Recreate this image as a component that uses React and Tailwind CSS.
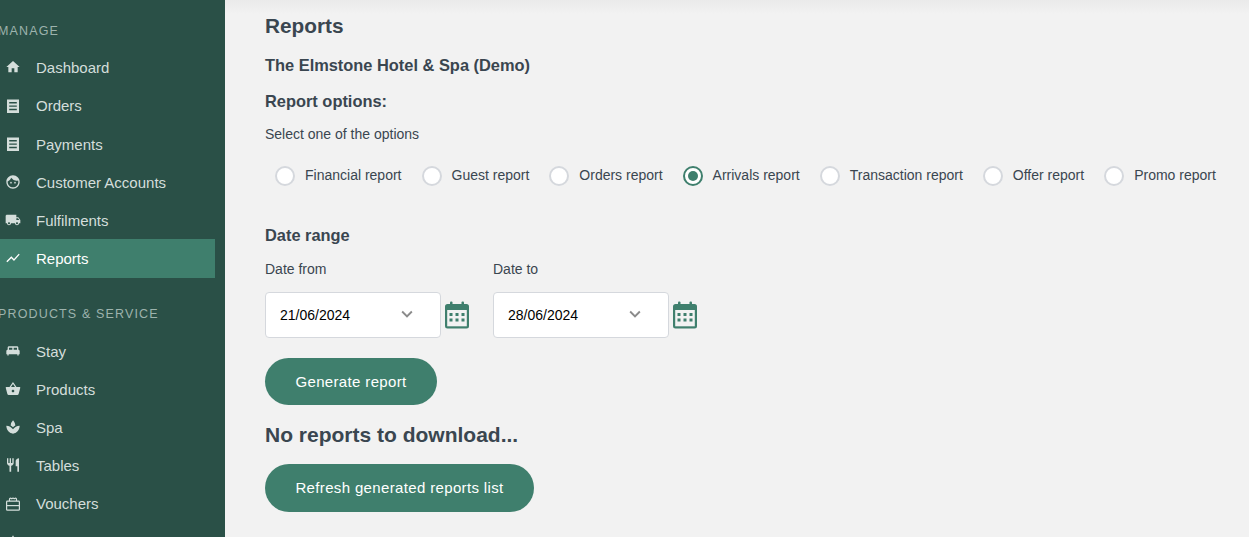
import { useState } from "react";
import {
  MdHome,
  MdFace,
  MdLocalShipping,
  MdShowChart,
  MdKingBed,
  MdShoppingBasket,
  MdSpa,
  MdRestaurant,
  MdCategory,
  MdKeyboardArrowDown,
} from "react-icons/md";

function DocIcon({ size }) {
  return (
    <svg width={size} height={size} viewBox="0 0 16 16" fill="currentColor">
      <path
        fillRule="evenodd"
        d="M2 1.5h12v13.5H2zM4.2 4v1.4h7.6V4zM4.2 7.4v1.4h7.6V7.4zM4.2 10.8v1.4h7.6v-1.4z"
      />
    </svg>
  );
}

function VoucherIcon({ size }) {
  return (
    <svg width={size} height={size} viewBox="0 0 16 16" fill="none" stroke="currentColor" strokeWidth="1.2">
      <rect x="1.6" y="5.2" width="12.8" height="9" rx="0.8" />
      <path d="M1.6 9.6h12.8" />
      <path d="M4.5 5V3.2c0-1.5 2-1.5 2.2 0c.2-1.5 2.4-1.5 2.6 0c.2-1.5 2.2-1.5 2.2 0V5" />
    </svg>
  );
}

const MANAGE = [
  { label: "Dashboard", icon: MdHome },
  { label: "Orders", icon: DocIcon },
  { label: "Payments", icon: DocIcon },
  { label: "Customer Accounts", icon: MdFace },
  { label: "Fulfilments", icon: MdLocalShipping },
  { label: "Reports", icon: MdShowChart, active: true },
];

const PRODUCTS = [
  { label: "Stay", icon: MdKingBed },
  { label: "Products", icon: MdShoppingBasket },
  { label: "Spa", icon: MdSpa },
  { label: "Tables", icon: MdRestaurant },
  { label: "Vouchers", icon: VoucherIcon },
  { label: "Categories", icon: MdCategory },
];

const REPORTS = [
  "Financial report",
  "Guest report",
  "Orders report",
  "Arrivals report",
  "Transaction report",
  "Offer report",
  "Promo report",
];

function NavItem({ item }) {
  const Icon = item.icon;
  return (
    <a
      className={`flex items-center h-[38.2px] w-[215px] ${
        item.active ? "bg-[#3f7f6d] text-white" : "text-[#d4dedb]"
      }`}
    >
      <span className="w-[36px] pl-[5px] flex-shrink-0">
        <Icon size={16} />
      </span>
      <span className="text-[15px] pt-[2px]">{item.label}</span>
    </a>
  );
}

function CalendarIcon() {
  return (
    <svg width="26" height="30" viewBox="0 0 26 30" className="flex-shrink-0">
      <rect x="6" y="1.5" width="2.5" height="5" rx="1" fill="#3f7f6d" />
      <rect x="17.5" y="1.5" width="2.5" height="5" rx="1" fill="#3f7f6d" />
      <rect x="1" y="4" width="24" height="24.5" rx="2.5" fill="#3f7f6d" />
      <rect x="3.2" y="10" width="19.6" height="16.3" fill="#f2f2f2" />
      {[5.5, 11.5, 17.5].map((x) =>
        [13, 18.5].map((y) => (
          <rect key={`${x}-${y}`} x={x} y={y} width="3" height="3" fill="#3f7f6d" />
        )),
      )}
    </svg>
  );
}

function DateField({ label, value }) {
  return (
    <div className="w-[228px]">
      <p className="text-[14px] leading-[16px] mb-[15px]">{label}</p>
      <div className="flex items-center gap-[3px]">
        <div className="w-[176px] h-[46px] bg-white border border-[#d5d8dd] rounded-[4px] pl-[14px] pr-[23px] flex items-center justify-between">
          <span className="text-[14px] text-black">{value}</span>
          <MdKeyboardArrowDown size={22} className="text-[#8b8b8b] -mt-[3px] -mr-[1px]" />
        </div>
        <CalendarIcon />
      </div>
    </div>
  );
}

export default function App() {
  const [selected, setSelected] = useState("Arrivals report");

  return (
    <div className="flex h-[537px] overflow-hidden bg-[#f2f2f2] font-['Liberation_Sans',Arial,sans-serif]">
      <aside className="w-[225px] flex-shrink-0 bg-[#2a5047] pt-[23px] overflow-hidden">
        <p className="text-[12.5px] leading-[16px] tracking-[1.15px] text-[#9db3ad] -ml-[2px] mb-[9.4px]">MANAGE</p>
        {MANAGE.map((item) => (
          <NavItem key={item.label} item={item} />
        ))}
        <p className="text-[12.5px] leading-[16px] tracking-[1.15px] text-[#9db3ad] -ml-[2px] mt-[28.4px] mb-[9.9px] whitespace-nowrap">
          PRODUCTS &amp; SERVICE
        </p>
        {PRODUCTS.map((item) => (
          <NavItem key={item.label} item={item} />
        ))}
      </aside>

      <main className="relative flex-grow pl-[40px] pt-[14px] text-[#3a4650]">
        <div className="absolute inset-x-0 top-0 h-[14px] bg-gradient-to-b from-[#eaeaea] to-transparent" />

        <h1 className="text-[20.8px] leading-[24px] font-bold">Reports</h1>
        <h2 className="text-[16.4px] leading-[20px] font-bold mt-[17px]">The Elmstone Hotel &amp; Spa (Demo)</h2>
        <h3 className="text-[16.4px] leading-[20px] font-bold mt-[16px]">Report options:</h3>
        <p className="text-[14px] leading-[16px] mt-[15px]">Select one of the options</p>

        <div className="flex items-center mt-[23px] pl-[10px] gap-[20px]">
          {REPORTS.map((r) => (
            <label key={r} className="flex items-center gap-[10px] text-[14px] whitespace-nowrap cursor-pointer">
              <input
                type="radio"
                name="report"
                checked={selected === r}
                onChange={() => setSelected(r)}
                className="sr-only"
              />
              <span
                className={`w-[20px] h-[20px] rounded-full bg-white flex items-center justify-center border-2 ${
                  selected === r ? "border-[#3f7f6d]" : "border-[#d5d8dd]"
                }`}
              >
                {selected === r && <span className="w-[10px] h-[10px] rounded-full bg-[#3f7f6d]" />}
              </span>
              {r}
            </label>
          ))}
        </div>

        <h3 className="text-[16.4px] leading-[20px] font-bold mt-[39px]">Date range</h3>
        <div className="flex mt-[16px]">
          <DateField label="Date from" value="21/06/2024" />
          <DateField label="Date to" value="28/06/2024" />
        </div>

        <button className="block mt-[20px] h-[47px] w-[172px] pt-[1px] rounded-full bg-[#3f7f6d] text-white text-[15px] tracking-[0.35px]">
          Generate report
        </button>
        <h2 className="text-[21px] leading-[24px] font-bold mt-[18px]">No reports to download...</h2>
        <button className="block mt-[17px] h-[48px] w-[269px] rounded-full bg-[#3f7f6d] text-white text-[15px] tracking-[0.35px]">
          Refresh generated reports list
        </button>
      </main>
    </div>
  );
}
